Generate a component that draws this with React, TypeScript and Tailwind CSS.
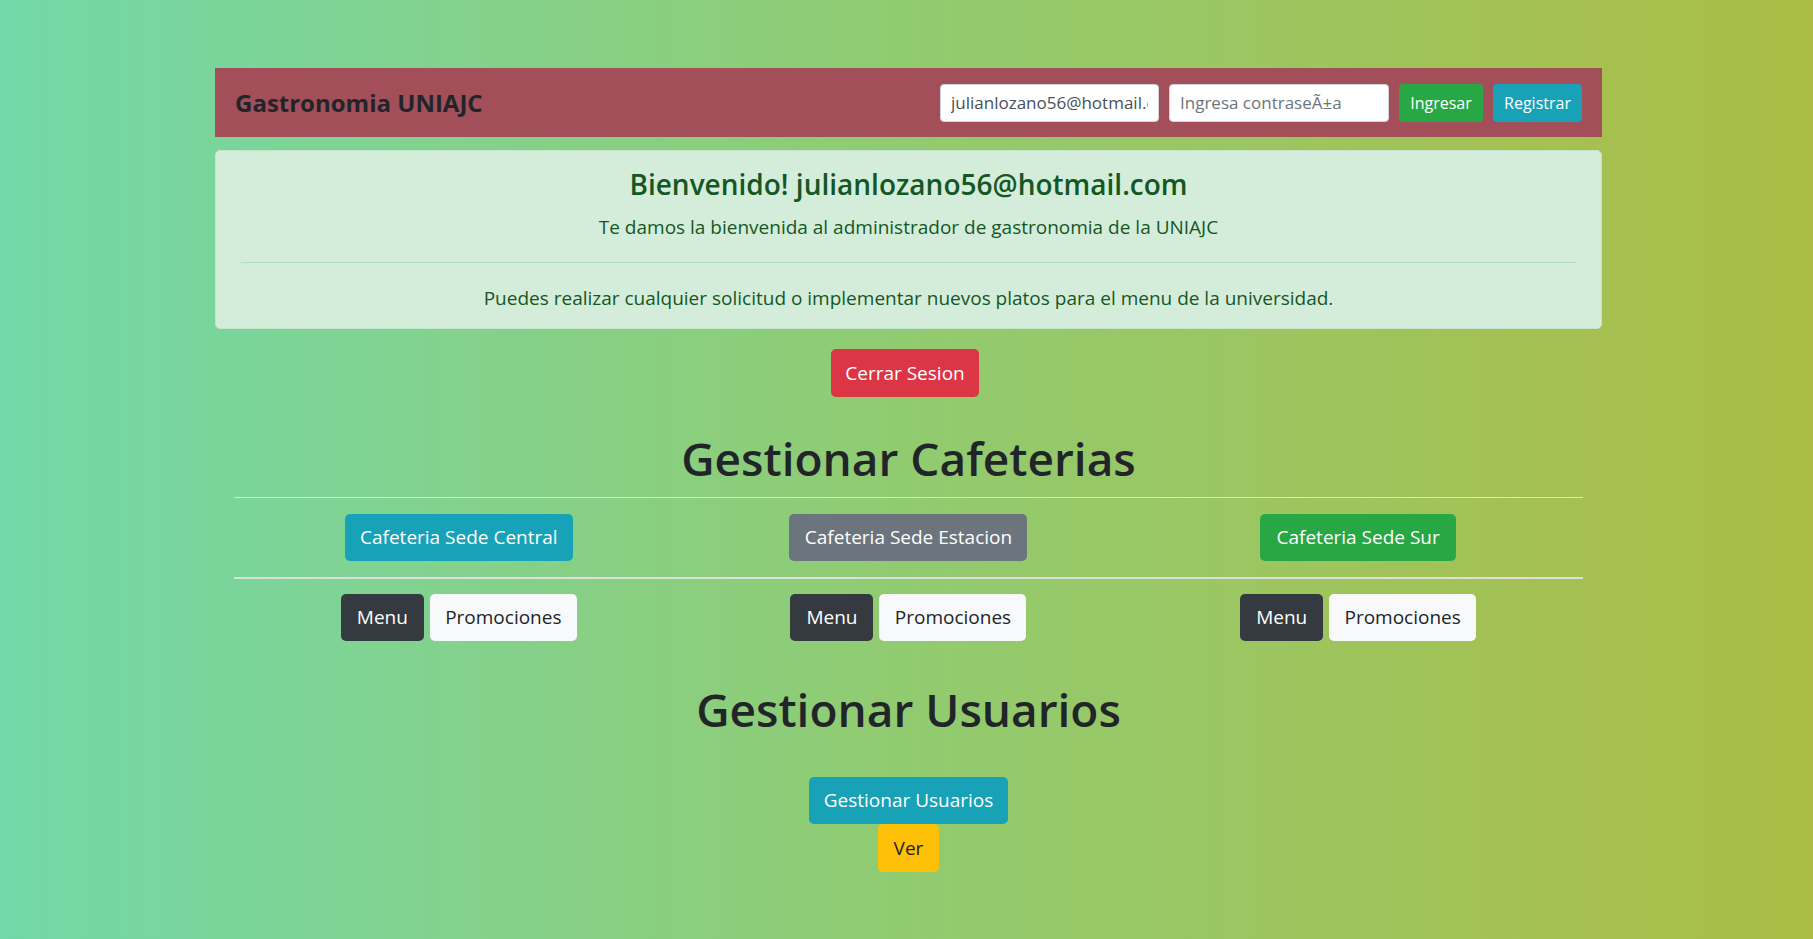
import React from "react";

const cafeterias = [
  { name: "Cafeteria Sede Central", color: "bg-[#17a2b8]", width: "w-[228px]" },
  { name: "Cafeteria Sede Estacion", color: "bg-[#6c757d]", width: "w-[238px]" },
  { name: "Cafeteria Sede Sur", color: "bg-[#28a745]", width: "w-[196px]" },
];

export default function App() {
  return (
    <div
      className="min-h-screen bg-gradient-to-r from-[#72d8a8] via-[#91cb70] to-[#abbd44] pl-[4px] pt-[68px] text-[#212529]"
      style={{ fontFamily: '"Open Sans", "Noto Sans", sans-serif' }}
    >
      <div className="mx-auto w-[1387px]">
        <nav className="flex h-[69px] items-center justify-between bg-[#a34f5a] px-[20px]">
          <span className="text-[24px] font-bold text-[#212529]">Gastronomia UNIAJC</span>
          <form className="flex items-center gap-[10px]">
            <input
              type="email"
              defaultValue="julianlozano56@hotmail.com"
              className="h-[38px] w-[219px] rounded-[4px] border border-[#ced4da] bg-white px-[10px] text-[17px] text-[#495057] outline-none"
            />
            <input
              type="password"
              placeholder="Ingresa contraseÃ±a"
              className="h-[38px] w-[220px] rounded-[4px] border border-[#ced4da] bg-white px-[10px] text-[17px] text-[#495057] outline-none placeholder:text-[#6c757d]"
            />
            <button type="button" className="h-[38px] w-[84px] rounded-[4px] bg-[#28a745] text-[16px] text-white">
              Ingresar
            </button>
            <button type="button" className="h-[38px] w-[89px] rounded-[4px] bg-[#17a2b8] text-[16px] text-white">
              Registrar
            </button>
          </form>
        </nav>

        <div className="mt-[13px] rounded-[5px] border border-[#c3e6cb] bg-[#d4edda] px-[25px] py-[15px] text-center text-[#155724]">
          <h4 className="mb-[10px] text-[28px] font-semibold leading-[36px]">
            Bienvenido! julianlozano56@hotmail.com
          </h4>
          <p className="text-[19px] leading-[30px]">
            Te damos la bienvenida al administrador de gastronomia de la UNIAJC
          </p>
          <hr className="my-[20px] border-t border-[#b1dfbb]" />
          <p className="text-[19px] leading-[30px]">
            Puedes realizar cualquier solicitud o implementar nuevos platos para el menu de la universidad.
          </p>
        </div>

        <div className="mt-[20px] flex justify-center pr-[7px]">
          <button type="button" className="h-[48px] w-[148px] rounded-[5px] bg-[#dc3545] text-[19px] text-white">
            Cerrar Sesion
          </button>
        </div>

        <div className="px-[19px]">
          <h1 className="mt-[31px] text-center text-[46px] font-semibold leading-[60px]">Gestionar Cafeterias</h1>
          <hr className="mt-[9px] border-t border-white/60" />
          <div className="grid grid-cols-3 pt-[16px]">
            {cafeterias.map((c) => (
              <div key={c.name} className="flex justify-center">
                <button
                  type="button"
                  className={`h-[47px] rounded-[5px] text-[19px] text-white ${c.color} ${c.width}`}
                >
                  {c.name}
                </button>
              </div>
            ))}
          </div>
          <hr className="mt-[16px] border-t-2 border-[#dedede]" />
          <div className="grid grid-cols-3 pt-[15px]">
            {cafeterias.map((c) => (
              <div key={c.name} className="flex justify-center gap-[6px]">
                <button type="button" className="h-[47px] w-[83px] rounded-[5px] bg-[#343a40] text-[19px] text-white">
                  Menu
                </button>
                <button type="button" className="h-[47px] w-[147px] rounded-[5px] bg-[#f8f9fa] text-[19px] text-[#212529]">
                  Promociones
                </button>
              </div>
            ))}
          </div>

          <h1 className="mt-[38px] text-center text-[46px] font-semibold leading-[60px]">Gestionar Usuarios</h1>
          <div className="mt-[38px] flex flex-col items-center">
            <button type="button" className="h-[47px] w-[199px] rounded-[5px] bg-[#17a2b8] text-[19px] text-white">
              Gestionar Usuarios
            </button>
            <button type="button" className="h-[48px] w-[61px] rounded-[5px] bg-[#ffc107] text-[19px] text-[#212529]">
              Ver
            </button>
          </div>
        </div>
      </div>
    </div>
  );
}
